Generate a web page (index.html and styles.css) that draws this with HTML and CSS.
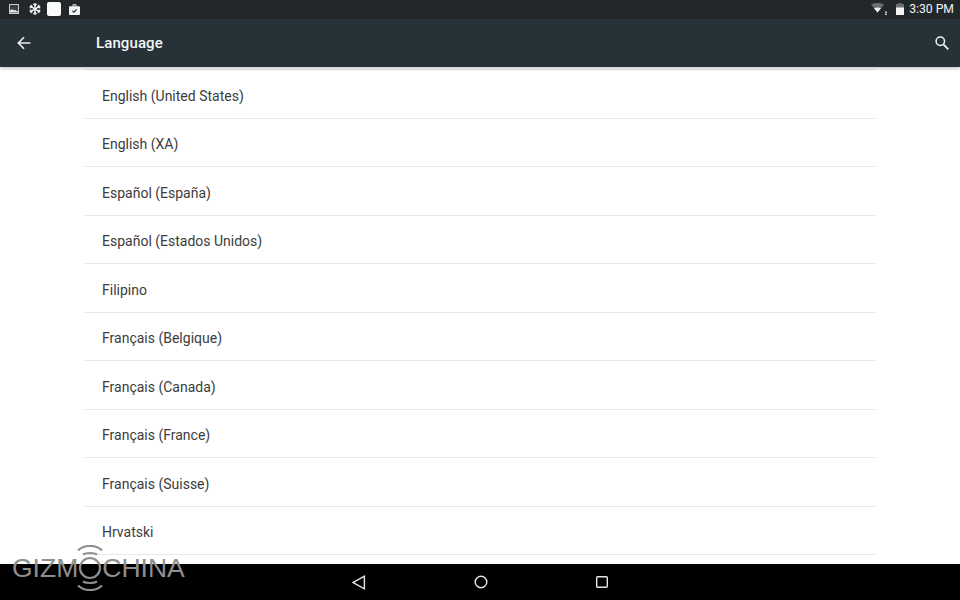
FILE: index.html
```html
<!DOCTYPE html>
<html lang="en">
<head>
    <meta charset="UTF-8">
    <title>Language</title>
    <link rel="stylesheet" href="styles.css">
</head>
<body>
    <div class="screen">
        <div class="status-bar">
            <div class="status-left">
                <svg class="icon-picture" width="10" height="10" viewBox="0 0 10 10"><path d="M0 0h10v10H0z" fill="#c9cbcc"/><path d="M1 1h8v8H1z" fill="#3a4043"/><path d="M1 8.500V6.500l2-1.500 1.500 1.500 1-.7L9 7.500v1z" fill="#e4e5e6"/></svg>
                <svg class="icon-flake" width="12" height="12" viewBox="0 0 13 13"><g stroke="#f2f3f3" fill="none"><path d="M6.500 0v13M.9 3.200l11.200 6.600M.9 9.800l11.200-6.600" stroke-width="1.500"/><path d="M4.600 1l1.900 1.900L8.400 1M4.600 12l1.900-1.900L8.400 12M.8 5.300l2.600-.7-.7-2.600M12.200 5.300l-2.600-.7.700-2.600M.8 7.700l2.600.7-.7 2.600M12.200 7.700l-2.600.7.700 2.600" stroke-width="1.200"/></g></svg>
                <div class="white-square"></div>
                <svg class="icon-work" width="11" height="11" viewBox="0 0 12 12"><path d="M0 3.500a1 1 0 0 1 1-1h2.800V1.300a1 1 0 0 1 1-1h2.400a1 1 0 0 1 1 1v1.200H11a1 1 0 0 1 1 1V11a1 1 0 0 1-1 1H1a1 1 0 0 1-1-1z" fill="#f2f3f3"/><path d="M4.900 1.400h2.200v1.100H4.900z" fill="#23282b"/><path d="M3.700 7.400l1.600 1.600 3-3" fill="none" stroke="#23282b" stroke-width="1.200"/></svg>
            </div>
            <div class="status-right">
                <svg class="wifi" width="16" height="12" viewBox="0 0 16 12"><path d="M0 1.500C4-.6 9-.6 13 1.500L6.500 9.500z" fill="#6b6f71"/><path d="M3 5.300c2-1.100 5-1.100 7 0L6.500 9.500z" fill="#f2f3f3"/><path d="M14.200 8.500h1.500v2H14.200zM14.200 11h1.500v1H14.200z" fill="#f2f3f3"/></svg>
                <svg class="battery" width="8" height="12" viewBox="0 0 8 12"><path d="M2.500 0h3v1H8v11H0V1h2.500z" fill="#6b6f71"/><path d="M0 4.500h8V12H0z" fill="#f2f3f3"/></svg>
                <span class="clock">3:30 PM</span>
            </div>
        </div>
        <header class="toolbar">
            <svg class="back-arrow" width="14" height="14" viewBox="0 0 14 14"><path d="M13.500 7H1.500M7 1.200L1.300 7 7 12.800" fill="none" stroke="#eef0f0" stroke-width="1.600"/></svg>
            <h1 class="toolbar-title">Language</h1>
            <svg class="search" width="14" height="14" viewBox="0 0 14 14"><circle cx="5.300" cy="5.300" r="4.200" fill="none" stroke="#eef0f0" stroke-width="1.500"/><path d="M8.400 8.400L13.300 13.300" stroke="#eef0f0" stroke-width="1.800"/></svg>
        </header>
        <main class="content">
            <ul class="lang-list">
                <li>English (United States)</li>
                <li>English (XA)</li>
                <li>Español (España)</li>
                <li>Español (Estados Unidos)</li>
                <li>Filipino</li>
                <li>Français (Belgique)</li>
                <li>Français (Canada)</li>
                <li>Français (France)</li>
                <li>Français (Suisse)</li>
                <li>Hrvatski</li>
            </ul>
        </main>
        <nav class="nav-bar">
            <svg width="14" height="15" viewBox="0 0 14 15"><path d="M12.400 1.200v12.600L1.200 7.500z" fill="none" stroke="#e6e6e6" stroke-width="1.400"/></svg>
            <svg width="14" height="14" viewBox="0 0 14 14"><circle cx="7" cy="7" r="5.800" fill="none" stroke="#e6e6e6" stroke-width="1.400"/></svg>
            <svg width="12" height="12" viewBox="0 0 12 12"><rect x=".7" y=".7" width="10.600" height="10.600" rx="1" fill="none" stroke="#e6e6e6" stroke-width="1.400"/></svg>
        </nav>
        <div class="watermark">
            <span class="wm-text">GIZM</span>
            <svg class="wm-waves" width="30" height="46" viewBox="0 0 30 46">
                <g fill="none" stroke="#8e8e8e" stroke-width="2.200">
                    <circle cx="15" cy="23" r="10"/>
                    <path d="M8 9.500C11 7.500 19 7.500 22 9.500M3 5.500C9-.5 21-.5 27 5.500M8 36.500C11 38.500 19 38.500 22 36.500M3 40.500C9 46.500 21 46.500 27 40.500"/>
                </g>
            </svg>
            <span class="wm-text">CHINA</span>
        </div>
    </div>
</body>
</html>
```
FILE: styles.css
```css
* {
    box-sizing: border-box;
    margin: 0;
    padding: 0;
}

body {
    font-family: Roboto, "Liberation Sans", sans-serif;
    background-color: #000;
}

.screen {
    position: relative;
    width: 960px;
    height: 600px;
    display: flex;
    flex-direction: column;
    overflow: hidden;
}

/* Status bar */
.status-bar {
    height: 19px;
    flex-shrink: 0;
    background-color: #22272a;
    display: flex;
    justify-content: space-between;
    align-items: center;
    padding: 0 6px 1px 9px;
}

.status-left {
    display: flex;
    align-items: center;
}

.icon-flake {
    margin-left: 10px;
}

.white-square {
    width: 14px;
    height: 14px;
    margin-left: 6px;
    border-radius: 2px;
    background-color: #fafafa;
}

.icon-work {
    margin-left: 8px;
}

.status-right {
    display: flex;
    align-items: center;
}

.battery {
    margin-left: 9px;
}

.clock {
    margin-left: 5px;
    color: #f2f3f3;
    font-size: 12.2px;
}

/* Toolbar */
.toolbar {
    height: 48px;
    flex-shrink: 0;
    background-color: #263238;
    display: flex;
    align-items: center;
    padding: 0 11px 0 17px;
    box-shadow: 0 2px 3px rgba(0, 0, 0, 0.2);
    position: relative;
}

.toolbar-title {
    margin-left: 65px;
    flex: 1;
    color: #f4f5f5;
    font-size: 15px;
    font-weight: 500;
    letter-spacing: 0.1px;
}

/* List */
.content {
    flex: 1;
    min-height: 0;
    background-color: #fff;
    padding: 2px 84px 0;
    overflow: hidden;
}

.lang-list {
    list-style-type: none;
    border-top: 1px solid #efefef;
}

.lang-list li {
    height: 48.5px;
    display: flex;
    align-items: center;
    padding: 4px 0 0 18px;
    color: #3c3c3c;
    font-size: 14px;
    border-bottom: 1px solid #e8e8e8;
}

/* Navigation bar */
.nav-bar {
    height: 36px;
    flex-shrink: 0;
    background-color: #000;
    display: flex;
    justify-content: center;
    align-items: center;
    gap: 108px;
}

/* Watermark lies over the list and the nav bar */
.watermark {
    position: absolute;
    left: 12px;
    top: 545px;
    display: flex;
    align-items: center;
}

.wm-text {
    color: #8e8e8e;
    font-family: "Liberation Sans", sans-serif;
    font-size: 26.5px;
    font-weight: 400;
}

.wm-waves {
    margin: 0 -3px;
}
```
